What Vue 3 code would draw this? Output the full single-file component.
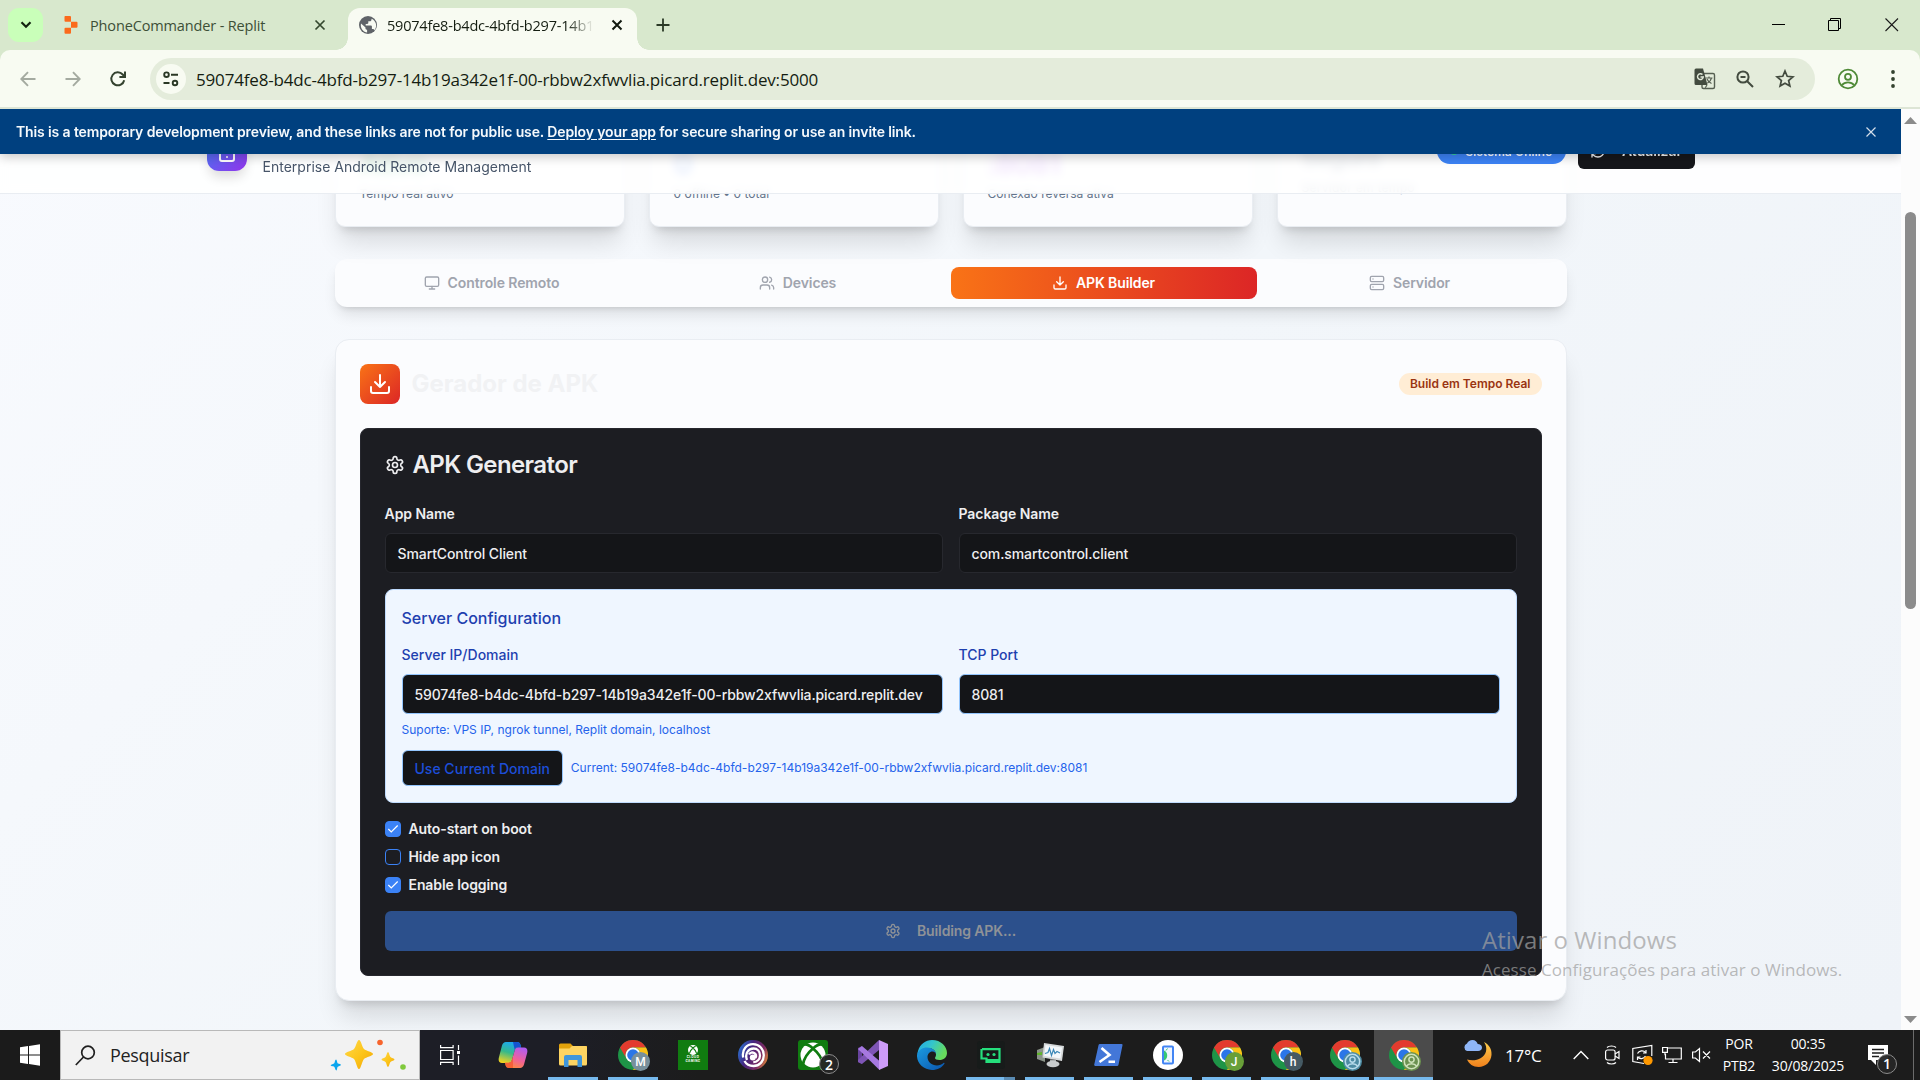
<script setup>
const host = '59074fe8-b4dc-4bfd-b297-14b19a342e1f-00-rbbw2xfwvlia.picard.replit.dev'

const stats = [
  { value: 'Ativo', note: 'Tempo real ativo', color: '#16a34a' },
  { value: '0', note: '0 offline • 0 total', color: '#2563eb' },
  { value: ':8081', note: 'Conexão reversa ativa', color: '#9333ea' },
  { value: 'Seguro', note: 'Servidor em tempo', color: '#64748b', raised: true },
]

const tabs = [
  { label: 'Controle Remoto', icon: 'monitor' },
  { label: 'Devices', icon: 'users' },
  { label: 'APK Builder', icon: 'download', active: true },
  { label: 'Servidor', icon: 'server' },
]

const options = [
  { label: 'Auto-start on boot', checked: true },
  { label: 'Hide app icon', checked: false },
  { label: 'Enable logging', checked: true },
]

const glyphs = {
  monitor: '<rect width="20" height="14" x="2" y="3" rx="2"/><path d="M8 21h8M12 17v4"/>',
  users: '<path d="M16 21v-2a4 4 0 0 0-4-4H6a4 4 0 0 0-4 4v2"/><circle cx="9" cy="7" r="4"/><path d="M22 21v-2a4 4 0 0 0-3-3.87M16 3.13a4 4 0 0 1 0 7.75"/>',
  download: '<path d="M21 15v4a2 2 0 0 1-2 2H5a2 2 0 0 1-2-2v-4M7 10l5 5 5-5M12 15V3"/>',
  server: '<rect width="20" height="8" x="2" y="2" rx="2"/><rect width="20" height="8" x="2" y="14" rx="2"/><path d="M6 6h.01M6 18h.01"/>',
  refresh: '<path d="M3 12a9 9 0 0 1 9-9 9.75 9.75 0 0 1 6.74 2.74L21 8M21 3v5h-5M21 12a9 9 0 0 1-9 9 9.75 9.75 0 0 1-6.74-2.74L3 16M8 16H3v5"/>',
  phone: '<rect width="14" height="20" x="5" y="2" rx="2"/><path d="M12 18h.01"/>',
  gear: '<path d="M12.22 2h-.44a2 2 0 0 0-2 2v.18a2 2 0 0 1-1 1.73l-.43.25a2 2 0 0 1-2 0l-.15-.08a2 2 0 0 0-2.73.73l-.22.38a2 2 0 0 0 .73 2.73l.15.1a2 2 0 0 1 1 1.72v.51a2 2 0 0 1-1 1.74l-.15.09a2 2 0 0 0-.73 2.73l.22.38a2 2 0 0 0 2.73.73l.15-.08a2 2 0 0 1 2 0l.43.25a2 2 0 0 1 1 1.73V20a2 2 0 0 0 2 2h.44a2 2 0 0 0 2-2v-.18a2 2 0 0 1 1-1.73l.43-.25a2 2 0 0 1 2 0l.15.08a2 2 0 0 0 2.73-.73l.22-.39a2 2 0 0 0-.73-2.73l-.15-.08a2 2 0 0 1-1-1.74v-.5a2 2 0 0 1 1-1.74l.15-.09a2 2 0 0 0 .73-2.73l-.22-.38a2 2 0 0 0-2.73-.73l-.15.08a2 2 0 0 1-2 0l-.43-.25a2 2 0 0 1-1-1.73V4a2 2 0 0 0-2-2z"/><circle cx="12" cy="12" r="3"/>',
}

const chromeProfiles = [
  { letter: 'J', color: '#689f38' },
  { letter: 'h', color: '#455a64' },
  { color: '#4d8ba3', ring: '#b9dcec' },
  { color: '#6b9150', ring: '#cfe3bb', current: true },
]
</script>

<template>
  <div class="screen">
    <div class="tabstrip">
      <div class="tab-search">
        <svg width="12" height="8" viewBox="0 0 12 8"><path d="M1.5 1.3 6 5.8l4.500-4.500" fill="none" stroke="#12230f" stroke-width="2.200" /></svg>
      </div>
      <div class="tab idle">
        <svg width="14" height="20" viewBox="0 0 14 20" fill="#fb6a1c"><path d="M1 1h5a1 1 0 0 1 1 1v4.700H1.500a1 1 0 0 1-1-1V2a1 1 0 0 1 .5-1zM7 6.700h5.500a1 1 0 0 1 1 1v4a1 1 0 0 1-1 1H7zM.500 13.700a1 1 0 0 1 1-1H7v5a1 1 0 0 1-1 1H1.500a1 1 0 0 1-1-1z" /></svg>
        <span class="idle-title">PhoneCommander - Replit</span>
        <svg class="close" width="12" height="12" viewBox="0 0 12 12"><path d="M1.500 1.500l9 9M10.500 1.500l-9 9" stroke="#35482f" stroke-width="1.700" /></svg>
      </div>
      <div class="tab current">
        <svg width="18" height="18" viewBox="0 0 18 18"><circle cx="9" cy="9" r="9" fill="#5f6368" /><path d="M2 7.500l4.500 4v1.500l1.600 1v2.500C4.500 16 1.800 13 1.800 9zM12.500 2.700v1c0 .8-.7 1.500-1.500 1.500H9.300V7c0 .5-.4.900-.9.900H6.700v1.700H12c.5 0 .9.400.9.900v2.600h.8c.8 0 1.400.5 1.600 1.200A7.300 7.300 0 0 0 12.500 2.700z" fill="#f8fbf2" /></svg>
        <span class="current-title">59074fe8-b4dc-4bfd-b297-14b19a</span>
        <svg class="close" width="12" height="12" viewBox="0 0 12 12"><path d="M1.500 1.500l9 9M10.500 1.500l-9 9" stroke="#12190f" stroke-width="2" /></svg>
      </div>
      <svg class="plus" width="14" height="14" viewBox="0 0 14 14"><path d="M7 .5v13M.5 7h13" stroke="#2b3a26" stroke-width="1.800" /></svg>
      <div class="window-controls">
        <svg width="14" height="14" viewBox="0 0 14 14"><path d="M1 6.500h13" stroke="#000" /></svg>
        <svg width="14" height="14" viewBox="0 0 14 14" fill="none" stroke="#000"><path d="M.500 2.500h10v10H.500zM2.500 2.500V.500h10v10h-2" /></svg>
        <svg width="14" height="14" viewBox="0 0 14 14"><path d="M.500.500l12.500 12.500M13 .500L.500 13" stroke="#1a1a1a" stroke-width="1.100" /></svg>
      </div>
    </div>

    <div class="toolbar-wrap">
      <div class="toolbar">
        <svg class="back" width="16" height="16" viewBox="0 0 16 16" fill="none" stroke="#a4aaa0" stroke-width="1.900"><path d="M15.500 8H1.500M8 1.200 1.300 8 8 14.800" /></svg>
        <svg class="forward" width="16" height="16" viewBox="0 0 16 16" fill="none" stroke="#a4aaa0" stroke-width="1.900"><path d="M.500 8h14M8 1.200 14.700 8 8 14.800" /></svg>
        <svg class="reload" width="18" height="18" viewBox="0 0 18 18" fill="none" stroke="#34422f" stroke-width="2"><path d="M15.200 10.200A6.500 6.500 0 1 1 13.700 4.500L15.500 6.500M16 1.500v5.600h-5.600" /></svg>
        <div class="omnibox">
          <div class="site-info">
            <svg width="18" height="18" viewBox="0 0 18 18" fill="none" stroke="#2a3825" stroke-width="1.900"><circle cx="4.500" cy="4.700" r="2.300" /><path d="M9 4.700h7M1.500 13h6" /><circle cx="13" cy="13" r="2.300" /></svg>
          </div>
          <span class="url">{{ host }}:5000</span>
          <svg class="translate" width="22" height="22" viewBox="0 0 22 22"><rect x="8" y="5.500" width="12.500" height="15" rx="1.500" fill="none" stroke="#565f52" stroke-width="1.400" /><path d="M2 .5h7l4.500 16.500H2A1.500 1.500 0 0 1 .5 15.500V2A1.500 1.500 0 0 1 2 .5z" fill="#434b3f" /><path d="M8.500 6.600A2.900 2.900 0 1 0 9.300 9H6.500" fill="none" stroke="#e4ecdb" stroke-width="1.400" /><path d="M11.500 10h7M15 8.500V10M17.500 10c-.6 2.500-2.500 4.300-4.200 5.300M13 11c.8 2 2.400 3.500 4.500 4.500M13 17l-1.700 2.800" fill="none" stroke="#565f52" stroke-width="1.200" /></svg>
          <svg class="zoom-out" width="18" height="18" viewBox="0 0 18 18" fill="none" stroke="#434b3f" stroke-width="2"><circle cx="7" cy="7" r="5.600" /><path d="M11.200 11.200 17 17M4.500 7h5" /></svg>
          <svg class="star" width="20" height="19" viewBox="0 0 20 19" fill="none" stroke="#434b3f" stroke-width="1.700"><path d="M10 2l2.200 5.300 5.700.5-4.300 3.700 1.300 5.600L10 14.200l-4.900 2.900 1.300-5.600L2.100 7.800l5.700-.5z" /></svg>
        </div>
        <svg class="profile" width="22" height="22" viewBox="0 0 22 22" fill="none" stroke="#4f8a37" stroke-width="1.800"><circle cx="11" cy="11" r="9.300" /><circle cx="11" cy="8.800" r="3" /><path d="M4.800 17.300c1.500-1.900 3.700-2.900 6.200-2.900s4.700 1 6.200 2.900" /></svg>
        <svg class="dots" width="4" height="18" viewBox="0 0 4 18" fill="#34422f"><circle cx="2" cy="2" r="1.900" /><circle cx="2" cy="9" r="1.900" /><circle cx="2" cy="16" r="1.900" /></svg>
      </div>
    </div>

    <div class="viewport">
      <div class="page">
        <div class="banner">
          <span>This is a temporary development preview, and these links are not for public use. <a>Deploy your app</a> for secure sharing or use an invite link.</span>
          <svg width="10" height="10" viewBox="0 0 10 10"><path d="M.5.500l9 9M9.500.500l-9 9" stroke="#d3dfeb" stroke-width="1.200" /></svg>
        </div>
        <header class="site-header">
          <div class="header-inner">
            <div class="logo"><svg class="ico" width="24" height="24" viewBox="0 0 24 24" v-html="glyphs.phone" /></div>
            <p class="tagline">Enterprise Android Remote Management</p>
            <span class="status"><i />Sistema Online</span>
            <span class="refresh"><svg class="ico" width="16" height="16" viewBox="0 0 24 24" v-html="glyphs.refresh" />Atualizar</span>
          </div>
        </header>

        <main>
          <section class="stats">
            <article v-for="s in stats" :key="s.note" class="stat" :class="{ raised: s.raised }">
              <strong :style="{ color: s.color }">{{ s.value }}</strong>
              <p>{{ s.note }}</p>
            </article>
          </section>

          <nav class="tabs">
            <span v-for="t in tabs" :key="t.label" class="tab-item" :class="{ active: t.active }">
              <svg class="ico" width="16" height="16" viewBox="0 0 24 24" v-html="glyphs[t.icon]" /><span class="lift">{{ t.label }}</span>
            </span>
          </nav>

          <section class="panel">
            <div class="panel-head">
              <div class="panel-icon"><svg class="ico" width="24" height="24" viewBox="0 0 24 24" v-html="glyphs.download" /></div>
              <h2>Gerador de APK</h2>
              <span class="pill"><span class="lift">Build em Tempo Real</span></span>
            </div>

            <div class="generator">
              <h3><svg class="ico" width="20" height="20" viewBox="0 0 24 24" v-html="glyphs.gear" /><span class="lift">APK Generator</span></h3>
              <div class="row">
                <div class="field"><label>App Name</label><div class="input">SmartControl Client</div></div>
                <div class="field"><label>Package Name</label><div class="input">com.smartcontrol.client</div></div>
              </div>

              <div class="server">
                <h4>Server Configuration</h4>
                <div class="row">
                  <div class="field">
                    <label>Server IP/Domain</label>
                    <div class="input host">{{ host }}</div>
                    <p class="hint">Suporte: VPS IP, ngrok tunnel, Replit domain, localhost</p>
                  </div>
                  <div class="field"><label>TCP Port</label><div class="input host">8081</div></div>
                </div>
                <div class="domain">
                  <span class="use-domain">Use Current Domain</span>
                  <span class="hint-inline">Current: {{ host }}:8081</span>
                </div>
              </div>

              <div class="options">
                <div v-for="o in options" :key="o.label" class="option">
                  <span class="box" :class="{ on: o.checked }">
                    <svg v-if="o.checked" width="14" height="14" viewBox="0 0 24 24" fill="none" stroke="#fff" stroke-width="2"><path d="M20 6 9 17l-5-5" /></svg>
                  </span><span class="lift">{{ o.label }}</span>
                </div>
              </div>
              <div class="build"><svg class="ico" width="16" height="16" viewBox="0 0 24 24" v-html="glyphs.gear" /><span class="lift">Building APK...</span></div>
            </div>
          </section>
        </main>
      </div>
      <div class="scrollbar">
        <svg width="13" height="7" viewBox="0 0 13 7"><path d="M6.500 0 13 7H0z" fill="#8b8b8b" /></svg>
        <div class="thumb" />
        <svg width="13" height="7" viewBox="0 0 13 7"><path d="M0 0h13L6.500 7z" fill="#8b8b8b" /></svg>
      </div>
    </div>

    <div class="watermark"><p class="w1">Ativar o Windows</p><p class="w2">Acesse Configurações para ativar o Windows.</p></div>

    <footer class="taskbar">
      <div class="start"><svg width="20" height="22" viewBox="0 0 20 22" fill="#fff"><path d="M0 3.200 8 2v8.500H0zM9 1.900 20 .3v10.200H9zM0 11.500h8V20l-8-1.200zM9 11.500h11v10.200L9 20.100z" /></svg></div>
      <div class="search">
        <svg width="21" height="21" viewBox="0 0 21 21" fill="none" stroke="#202020" stroke-width="1.700"><circle cx="13" cy="7.500" r="6.300" /><path d="M8.500 12 .8 20" /></svg>
        <span>Pesquisar</span>
        <svg class="sparkles" width="78" height="34" viewBox="0 0 78 34">
          <defs><linearGradient id="gold" x1="0" y1="0" x2="1" y2="1"><stop offset="0" stop-color="#ffd84a" /><stop offset=".55" stop-color="#fcc419" /><stop offset="1" stop-color="#f0a30a" /></linearGradient></defs>
          <path d="M30 2c2 0 3 7 5 9s9 3 9 5-7 3-9 5-3 10-5 10-3-8-5-10-9-3-9-5 7-3 9-5 3-9 5-9z" fill="url(#gold)" />
          <path d="M59 14c1 0 1.500 4 2.500 5s4 1.500 4 2.500-3 1.500-4 2.500-1.500 5-2.500 5-1.500-4-2.500-5-4-1.500-4-2.500 3-1.500 4-2.500 1.500-5 2.500-5z" fill="url(#gold)" />
          <path d="M7 21.500c1 0 1 3.500 2 4s3.200.5 3 1.500-3 1-3.500 2-.3 3.600-1.300 3.400-1.200-3-2-3.600-3.700-.5-3.500-1.500 3-1 3.600-2 .700-3.800 1.700-3.800z" fill="#0aa5ee" />
          <circle cx="51" cy="4.500" r="2.800" fill="#f7642c" /><circle cx="74" cy="29" r="2.800" fill="#80c93c" />
        </svg>
      </div>
      <div class="apps">
        <div class="app wide task-view"><svg width="20" height="20" viewBox="0 0 20 20" fill="none" stroke="#fff" stroke-width="1.200"><path d="M.600 5.500h12.500v9H.600zM.600 0v2.600h12.500V0M.600 20v-2.600h12.500V20M18.500 0v5M18.500 10.500V20" /><path d="M17 6h3v3h-3z" fill="#fff" stroke="none" /></svg></div>
        <div class="app wide">
          <svg width="30" height="28" viewBox="0 0 30 28">
            <defs>
              <linearGradient id="cpA" x1=".6" y1="0" x2=".3" y2="1"><stop offset="0" stop-color="#1aa7f5" /><stop offset=".5" stop-color="#35b98b" /><stop offset="1" stop-color="#f3d31f" /></linearGradient>
              <linearGradient id="cpB" x1=".7" y1="0" x2=".3" y2="1"><stop offset="0" stop-color="#b15cf0" /><stop offset=".55" stop-color="#f0619a" /><stop offset="1" stop-color="#ff8a3c" /></linearGradient>
            </defs>
            <path d="M8 1h11c2 0 3 1 3.500 3l.7 2.500h-3c-2 0-3 1-3.500 3L14 19c-.7 2-1.500 3-3.500 3H4c-3 0-4-2.500-3-6L4 4.500C4.700 2.300 6 1 8 1z" fill="url(#cpA)" />
            <path d="M15 1h4c2 0 3 1 3.500 3l.7 2.500h-3c-2 0-3 .5-3.500 2.500z" fill="#1454cf" />
            <path d="M22 27H11c-2 0-3-1-3.500-3L7 21.800h3.500c2 0 2.800-1 3.500-3L16.700 9.500c.5-2 1.500-3 3.500-3H26c3 0 4 2.500 3 6L26 23.500c-.7 2.200-2 3.500-4 3.500z" fill="url(#cpB)" />
            <path d="M7 21.800h3.500c2 0 2.800-1 3.500-3l1-3.200V27h-4c-2 0-3-1-3.500-3z" fill="#f4552f" opacity=".75" />
          </svg>
        </div>
        <div class="app wide open"><svg width="28" height="24" viewBox="0 0 28 24"><path d="M0 2a1.500 1.500 0 0 1 1.500-1.500h10L14 3H28v6H0z" fill="#e2a20b" /><path d="M0 5.500h10.500L13 3h13.500A1.500 1.500 0 0 1 28 4.500V21a1.500 1.500 0 0 1-1.500 1.500h-25A1.500 1.500 0 0 1 0 21z" fill="#fdd462" /><path d="M5 14a2 2 0 0 1 2-2h14a2 2 0 0 1 2 2v10h-4.500v-7h-9v7H5z" fill="#3f96db" /></svg></div>
        <div class="app wide open"><svg class="chrome" width="30" height="30" viewBox="0 0 48 48"><circle cx="24" cy="24" r="24" fill="#1e9447" /><path d="M24 12h20.800A24 24 0 0 0 3.200 12L13.600 30A12 12 0 0 1 24 12z" fill="#e33b2e" /><path d="M24 12h20.800A24 24 0 0 1 24 48L34.400 30A12 12 0 0 0 24 12z" fill="#fbc116" /><circle cx="24" cy="24" r="12" fill="#fff" /><circle cx="24" cy="24" r="9.300" fill="#2a76e8" /></svg><b class="avatar muted">M</b></div>
        <div class="app wide"><div class="cloud"><svg width="10" height="10" viewBox="0 0 30 30"><circle cx="15" cy="15" r="15" fill="#fff" /><path d="M7 4c3 0 6 3 8 5 2-2 5-5 8-5M15 9C9 14 5 20 4 26M15 9c6 5 10 11 11 17" fill="none" stroke="#107c10" stroke-width="3.500" /></svg><em>CLOUD</em><em>GAMING</em></div></div>
        <div class="app wide">
          <svg width="30" height="30" viewBox="0 0 30 30"><defs><linearGradient id="ubi" x1="0" y1=".3" x2="1" y2=".7"><stop offset="0" stop-color="#2c6fd0" /><stop offset=".35" stop-color="#45257f" /><stop offset=".75" stop-color="#7e2b62" /><stop offset="1" stop-color="#e08a3a" /></linearGradient></defs><circle cx="15" cy="15" r="15" fill="url(#ubi)" /><g fill="none" stroke="#fff" stroke-width="2.300"><path d="M5.200 17.500C3.500 9 9 4.200 15 4.200c6.500 0 10.800 5 10.800 11S21.500 26 15.500 26c-4.500 0-7.500-2.200-9-5" /><path d="M9 20C6.500 13.500 10.500 8.500 15.500 8.500c4 0 6.500 3.200 6.500 7s-3 6.700-6.700 6.700" /><path d="M11 14.500c1-2 3.500-2.500 5.200-1.500 1.900 1.200 2.200 3.300 1.300 5" /></g><circle cx="14.800" cy="17.500" r="3" fill="#fff" /></svg>
        </div>
        <div class="app wide"><svg width="30" height="30" viewBox="0 0 30 30"><rect width="30" height="30" rx="3" fill="#107c10" /><circle cx="15" cy="15" r="12.500" fill="#fff" /><path d="M6 4.500c3.500-.5 6.500 1.700 9 4 2.500-2.300 5.500-4.500 9-4M15 8.500C9.500 13 6 18 5 24.500M15 8.500c5.500 4.500 9 9.500 10 16" fill="none" stroke="#107c10" stroke-width="2.800" /></svg><b class="count">2</b></div>
        <div class="app wide"><svg width="30" height="30" viewBox="0 0 30 30"><path d="M0 8l4-2v18l-4-2z" fill="#67439d" /><path d="M21 0v10L4 24l-4-2v-2z" fill="#7e55b5" /><path d="M4 6l17.500 15V30L0 9z" fill="#a678e0" /><path d="M21 0l9 4v22l-9 4z" fill="#cd9bf8" /></svg></div>
        <div class="app">
          <svg width="30" height="30" viewBox="0 0 30 30"><defs><linearGradient id="edA" x1="0" y1="0" x2="1" y2=".4"><stop offset="0" stop-color="#20a7e8" /><stop offset=".5" stop-color="#34c5cc" /><stop offset="1" stop-color="#67dc5c" /></linearGradient><linearGradient id="edB" x1="0" y1="0" x2="1" y2="1"><stop offset="0" stop-color="#1a9be0" /><stop offset="1" stop-color="#0b55ae" /></linearGradient></defs><path d="M1 11C3 4 8.500 0 15 0c9 0 15 6.500 15 13 0 4.500-3.500 7-7.500 7-3 0-4.500-1-4.500-2 0-.8 1-1.200 1-3.500C19 11 16 8 11 8 6 8 2 11 0 15z" fill="url(#edA)" /><path d="M0 15c1-5 5.500-7.500 10-7.500 5 0 9 3 9 7 0-1.500-1.500-3-3.500-3-3 0-5 2.500-5 5.500 0 4.500 4 8.500 9.500 8.500 2.500 0 5-1 6.500-2.500.6-.6 1.300 0 .9.700C25 27.500 20.500 30 15 30 6.500 30-.5 23 0 15z" fill="url(#edB)" /></svg>
        </div>
        <div class="app open grouped"><svg width="28" height="28" viewBox="0 0 28 28"><rect width="28" height="28" rx="3" fill="#171b1a" /><path d="M5 8.200h17.500v11H9.500M4.500 8v9.500h5V21h14" fill="none" stroke="#25e07d" stroke-width="2.200" /><circle cx="11" cy="13.500" r="1.600" fill="#25e07d" /><circle cx="17" cy="13.500" r="1.600" fill="#25e07d" /></svg></div>
        <div class="app open"><svg width="28" height="26" viewBox="0 0 28 26"><path d="M1 8l8-3v15l-8-3z" fill="#8b9489" /><path d="M1 11l5-1v3l-5 0z" fill="#60b42a" /><path d="M8 1l20 3-2 15L6.500 15.500z" fill="#d6d9da" /><path d="M9.500 3l16.500 2.500-1.500 11L8.200 14z" fill="#f3f7fa" /><path d="M9 11.500l3-1 1.500-4 2 7 2-6 1.500 4 2-2 3 1.500" fill="none" stroke="#3a87b7" stroke-width="1.200" /><path d="M14 17.500h6v3h-6z" fill="#a9adad" /><ellipse cx="17" cy="22" rx="6.500" ry="3.200" fill="#c9cccd" /></svg></div>
        <div class="app open"><svg width="29" height="22" viewBox="0 0 29 22"><path d="M6 0h21.500a1 1 0 0 1 1 1.200l-4 19.500a1.500 1.500 0 0 1-1.500 1.200H1.200A1 1 0 0 1 .2 20.700L4.500 1.200A1.500 1.500 0 0 1 6 0z" fill="#4377d8" /><path d="M7.500 4l8 7-10 7M14.500 17.800h6.500" fill="none" stroke="#fff" stroke-width="2.600" /></svg></div>
        <div class="app open"><svg width="30" height="30" viewBox="0 0 30 30"><circle cx="15" cy="15" r="15" fill="#fff" /><rect x="10" y="6.500" width="10" height="17" rx="1" fill="#eef4ff" stroke="#4285f4" stroke-width="2" /><path d="M11 10.500a5.500 5.500 0 0 1 0 10z" fill="#35c774" /><path d="M13 10.500l1.500-2M14.500 20l1.500 1.500" stroke="#35c774" stroke-width="1" /></svg></div>
        <div v-for="(p, i) in chromeProfiles" :key="i" class="app open" :class="{ focused: p.current }">
          <svg class="chrome" width="30" height="30" viewBox="0 0 48 48"><circle cx="24" cy="24" r="24" fill="#1e9447" /><path d="M24 12h20.800A24 24 0 0 0 3.200 12L13.600 30A12 12 0 0 1 24 12z" fill="#e33b2e" /><path d="M24 12h20.800A24 24 0 0 1 24 48L34.400 30A12 12 0 0 0 24 12z" fill="#fbc116" /><circle cx="24" cy="24" r="12" fill="#fff" /><circle cx="24" cy="24" r="9.300" fill="#2a76e8" /></svg>
          <b class="avatar" :style="{ background: p.color }">
            <template v-if="p.letter">{{ p.letter }}</template>
            <svg v-else width="19" height="19" viewBox="0 0 19 19" fill="none" :stroke="p.ring" stroke-width="1.500"><circle cx="9.500" cy="9.500" r="7.200" /><circle cx="9.500" cy="7.600" r="2.600" /><path d="M4.500 14c1-1.500 3-2.300 5-2.300s4 .8 5 2.300" /></svg>
          </b>
        </div>
      </div>
      <div class="tray">
        <svg class="weather" width="30" height="30" viewBox="0 0 30 30"><defs><linearGradient id="moon" x1="0" y1="0" x2="0" y2="1"><stop offset="0" stop-color="#ffcf4d" /><stop offset="1" stop-color="#f0801c" /></linearGradient></defs><path d="M21 3c5 2.500 8 7 7.500 13-.6 7-6 12-12.800 12C10 28 6 25 4 20.500c8 2.500 17-1 19-8 .8-3.500 0-6.500-2-9.500z" fill="url(#moon)" /><path d="M4 12a4 4 0 0 1 0-7.500C5 2.500 7 1 9.500 1c2.700 0 4.600 1.700 5.200 4 2.300 0 4.300 1.300 4.300 3.500S17.500 12 15 12z" fill="#8fb6f7" /></svg>
        <span class="temp">17°C</span>
        <svg class="chev" width="16" height="10" viewBox="0 0 16 10" fill="none" stroke="#fff" stroke-width="1.400"><path d="M.700 9 8 1.500 15.300 9" /></svg>
        <svg class="cam" width="15" height="20" viewBox="0 0 15 20" fill="none" stroke="#fff" stroke-width="1.200"><rect x=".6" y="5" width="9.500" height="10" rx="2" /><path d="M10 9l4-2.500v7L10 11M2 2.500c2-2 7-2 9 0M2 17.500c2 2 7 2 9 0" /></svg>
        <svg class="upd" width="22" height="22" viewBox="0 0 22 22" fill="none" stroke="#fff" stroke-width="1.200"><path d="M12 19.500.800 17.500V4.500L19.800 1.500V12M5.500 9.500c1.500-3 6-3.500 8-1M14 6v3h-3M13.500 12c-1.500 3-6 3.500-8 1M5.500 16v-3h3" /><circle cx="16" cy="16.500" r="4.600" fill="#ff9800" stroke="none" /></svg>
        <svg class="net" width="20" height="18" viewBox="0 0 20 18" fill="none" stroke="#fff" stroke-width="1.200"><path d="M6 2h13.300v11H3.500V8M11 13v3.500M6.500 16.500h9M.6 1.500h4.800v4.800H.6zM3 6.300v3" /></svg>
        <svg class="vol" width="19" height="16" viewBox="0 0 19 16" fill="none" stroke="#fff" stroke-width="1.200"><path d="M.6 5h2.800L7.500 1.500v13L3.400 11H.6zM11 4.500l7 7M18 4.500l-7 7" /></svg>
        <div class="lang"><span>POR</span><span>PTB2</span></div>
        <div class="clock"><span>00:35</span><span>30/08/2025</span></div>
        <div class="notif"><svg width="20" height="20" viewBox="0 0 20 20"><path d="M0 0h20v15H8v5l-5-5H0z" fill="#fff" /><path d="M4 4.500h12M4 8h12M4 11.500h7" stroke="#1c1c1c" stroke-width="1.300" /></svg><b class="count">1</b></div>
        <i class="peek" />
      </div>
    </footer>
  </div>
</template>

<style>
body { overflow: hidden; }
</style>

<style scoped>
* { box-sizing: border-box; }
p, h2, h3, h4 { margin: 0; }
svg { display: block; flex: none; }
.screen {
  position: relative; width: 1920px; height: 1080px; overflow: hidden;
  display: flex; flex-direction: column;
  font-family: "Open Sans", "Noto Sans", sans-serif;
}
.ico { fill: none; stroke: currentColor; stroke-width: 2; stroke-linecap: round; stroke-linejoin: round; }
.lift { padding-bottom: 2px; }

/* Browser frame */
.tabstrip { height: 50px; background: #d8e8cd; display: flex; align-items: center; padding-left: 8px; flex: none; }
.tab-search { width: 35px; height: 34px; border-radius: 11px; background: #c9ffb9; display: flex; align-items: center; justify-content: center; }
.tab { display: flex; align-items: center; font-size: 14.500px; white-space: nowrap; }
.idle { width: 305px; padding-left: 20.500px; color: #3d4f37; }
.idle-title { margin-left: 12.500px; width: 224px; letter-spacing: -.14px; }
.current { position: relative; width: 289px; height: 42px; margin-top: 8px; padding: 0 0 8px 11px; border-radius: 12px 12px 0 0; background: #f8fbf2; color: #141d11; }
.current::before, .current::after { content: ""; position: absolute; bottom: 0; width: 12px; height: 12px; }
.current::before { left: -12px; background: radial-gradient(circle at 0 0, transparent 11.500px, #f8fbf2 12px); }
.current::after { right: -12px; background: radial-gradient(circle at 100% 0, transparent 11.500px, #f8fbf2 12px); }
.current-title { margin-left: 10px; width: 207px; overflow: hidden; letter-spacing: -.2px; mask-image: linear-gradient(90deg, #000 180px, transparent 207px); }
.current .close { margin-left: 17px; }
.plus { margin-left: 19px; }
.window-controls { margin-left: auto; display: flex; gap: 43px; padding: 0 21px 1px 0; }
.window-controls svg { width: 14px; }
.toolbar-wrap { height: 59px; background: #d8e8cd; flex: none; }
.toolbar { height: 59px; background: #f8fbf2; border-bottom: 2px solid #dde5d5; border-radius: 10px 10px 0 0; display: flex; align-items: center; padding-left: 20px; }
.forward { margin-left: 29px; }
.reload { margin-left: 28px; }
.omnibox { margin-left: 23px; width: 1665px; height: 42px; border-radius: 21px; background: #e4ecdb; display: flex; align-items: center; padding-left: 6px; }
.site-info { width: 30px; height: 30px; border-radius: 50%; background: #f8fbf2; display: flex; align-items: center; justify-content: center; }
.url { margin-left: 10px; width: 1498px; padding-top: 1px; font-size: 17px; color: #141d11; letter-spacing: -.165px; white-space: nowrap; }
.zoom-out { margin-left: 20px; }
.star { margin-left: 21px; }
.profile { margin-left: 22px; }
.dots { margin-left: 32px; }

/* Web page */
.viewport { height: 921px; display: flex; flex: none; overflow: hidden; }
.page {
  position: relative; width: 1901px; overflow: hidden;
  font-family: Inter, sans-serif; font-size: 14px;
  background: linear-gradient(135deg, #f8fafe 0%, #f2f6fa 50%, #eff3f8 100%);
}
.banner {
  position: absolute; inset: 0 0 auto 0; z-index: 5; height: 45px; padding: 0 25px 0 16px;
  display: flex; align-items: center; justify-content: space-between;
  background: #00407f; color: #f5f9fc; font-size: 14px; font-weight: 600; letter-spacing: -.123px;
  box-shadow: 0 3px 10px rgba(0, 0, 0, .22);
}
.banner a { text-decoration: underline; text-underline-offset: 2px; }
.site-header {
  position: relative; z-index: 2; height: 85px; border-bottom: 1px solid #e9edf2;
  background: rgba(255, 255, 255, .89); backdrop-filter: blur(4px);
}
.header-inner { width: 1488px; height: 84px; margin: 0 auto; display: flex; align-items: center; }
.logo { width: 40px; height: 40px; border-radius: 12px; display: flex; align-items: center; justify-content: center; color: #fff; background: linear-gradient(135deg, #3b82f6, #9333ea); box-shadow: 0 8px 12px -2px rgba(0, 0, 0, .14); }
.tagline { margin: 32px 0 0 16px; color: #475569; font-size: 14px; line-height: 20px; letter-spacing: .01px; }
.status { margin-left: auto; width: 129px; height: 26px; border-radius: 13px; display: flex; align-items: center; padding-left: 13px; background: #3c83f6; color: #fff; font-size: 12px; font-weight: 600; }
.status i { width: 8px; height: 8px; margin-right: 8px; border-radius: 50%; background: #34d399; }
.refresh { margin-left: 12px; width: 117px; height: 36px; padding-bottom: 1px; border-radius: 6px; background: #16171b; color: #f2f2f3; display: flex; align-items: center; justify-content: center; gap: 16px; font-weight: 600; }

main { width: 1232px; margin: -98px auto 0; }
.stats { display: grid; grid-template-columns: repeat(4, 290px); justify-content: space-between; }
.stat {
  height: 131px; padding: 0 24px 24px; border-radius: 10px; border: 1px solid #e9edf2; background: #fbfcfe;
  display: flex; flex-direction: column; justify-content: flex-end;
  box-shadow: 0 20px 25px -5px rgba(0, 0, 0, .12), 0 8px 10px -6px rgba(0, 0, 0, .15);
}
.stat strong { font-size: 28px; line-height: 32px; font-weight: 700; margin-bottom: 6px; letter-spacing: -1px; }
.stat p { font-size: 12px; line-height: 16px; color: #64748b; }
.stat.raised { padding-bottom: 30px; }
.stat.raised strong { font-size: 24px; }
.stat.raised p { letter-spacing: .3px; }
.tabs {
  margin-top: 32px; height: 48px; padding: 8px 4px; display: grid; grid-template-columns: repeat(4, 1fr);
  border-radius: 12px; background: #fbfcfe;
  box-shadow: 0 10px 15px -3px rgba(0, 0, 0, .11), 0 4px 6px -4px rgba(0, 0, 0, .16);
}
.tab-item { display: flex; align-items: center; justify-content: center; gap: 8px; border-radius: 8px; color: #a0a4ae; font-weight: 600; letter-spacing: -.1px; }
.tab-item.active { color: #fff; background: linear-gradient(90deg, #f97316, #dc2626); }
.panel {
  margin-top: 32px; height: 662px; padding: 24px; border: 1px solid #e9edf2; border-radius: 14px; background: #fbfcfe;
  box-shadow: 0 20px 25px -5px rgba(0, 0, 0, .12), 0 8px 10px -6px rgba(0, 0, 0, .15);
}
.panel-head { height: 40px; display: flex; align-items: center; }
.panel-icon { width: 40px; height: 40px; border-radius: 8px; display: flex; align-items: center; justify-content: center; color: #fff; background: linear-gradient(135deg, #f97316, #dc2626); }
.panel h2 { margin-left: 12px; padding-bottom: 2px; font-size: 24px; font-weight: 700; color: #f1f2f4; }
.pill { margin-left: auto; height: 22px; padding: 0 11px; border-radius: 11px; display: flex; align-items: center; background: #ffedd5; color: #9a3412; font-size: 12px; font-weight: 600; }
.generator { margin-top: 24px; height: 548px; padding: 24px; border: 1px solid #26272e; border-radius: 8px; background: #1c1d22; color: #eeeef0; font-weight: 500; }
.generator h3 { display: flex; align-items: center; gap: 8px; height: 24px; font-size: 24px; font-weight: 600; letter-spacing: -.6px; }
.row { display: grid; grid-template-columns: repeat(2, minmax(0, 1fr)); gap: 16px; }
.generator > .row { margin-top: 27px; }
.field label { display: block; height: 20px; line-height: 20px; font-weight: 600; letter-spacing: -.06px; }
.input { margin-top: 9px; height: 40px; padding: 0 12px; display: flex; align-items: center; border: 1px solid #27282e; border-radius: 6px; background: #141518; white-space: nowrap; letter-spacing: -.1px; }
.server { margin-top: 16px; height: 214px; padding: 16px; border: 1px solid #bfdbfe; border-radius: 8px; background: #eff6ff; color: #1d4ed8; }
.server h4 { height: 24px; line-height: 24px; font-size: 16px; font-weight: 500; color: #1e40af; }
.server .row { margin-top: 15px; }
.server label { font-weight: 500; color: #1e40af; letter-spacing: 0; }
.server .input { border-color: #93c5fd; color: #eeeef0; }
.server .host { letter-spacing: -.125px; }
.hint { margin-top: 8px; font-size: 12px; line-height: 16px; font-weight: 400; color: #2563eb; }
.domain { margin-top: 12px; display: flex; align-items: center; gap: 8px; }
.use-domain { height: 36px; padding: 0 12px; display: flex; align-items: center; border: 1px solid #93c5fd; border-radius: 6px; background: #141518; color: #1d4ed8; }
.hint-inline { padding-bottom: 1px; font-size: 12px; font-weight: 400; color: #2563eb; }
.options { margin-top: 18px; display: flex; flex-direction: column; gap: 12px; }
.option { height: 16px; display: flex; align-items: center; gap: 8px; font-weight: 600; letter-spacing: -.09px; }
.box { width: 16px; height: 16px; border: 1px solid #3b82f6; border-radius: 4px; display: flex; align-items: center; justify-content: center; }
.box.on { background: #3b82f6; }
.build { margin-top: 18px; height: 40px; border-radius: 6px; display: flex; align-items: center; justify-content: center; gap: 16px; background: #2c508c; color: #8f9297; font-weight: 600; letter-spacing: -.12px; }

.scrollbar { width: 19px; background: #fcfcfc; display: flex; flex-direction: column; align-items: center; padding: 8px 0 7px; }
.thumb { width: 11px; height: 397px; margin: 88px 0 auto; border-radius: 6px; background: #8b8b8b; }
.watermark { position: absolute; left: 1482px; top: 921px; z-index: 6; color: rgba(160, 160, 160, .72); white-space: nowrap; }
.w1 { font-size: 24px; line-height: 38px; letter-spacing: .06px; }
.w2 { font-size: 17px; line-height: 22px; letter-spacing: .06px; }

/* Windows taskbar */
.taskbar { height: 50px; flex: none; display: flex; background: linear-gradient(90deg, #1b1b1b 0, #1b1b1b 60px, #1d1e26 420px, #1d1e26 560px, #1c1c1c 700px); color: #fff; }
.start { width: 60px; display: flex; align-items: center; justify-content: center; }
.search { width: 360px; background: #f2f2f2; border: 1px solid #b9b9b9; display: flex; align-items: center; padding-left: 14px; color: #222; font-size: 18px; }
.search span { margin-left: 14px; width: 80px; letter-spacing: -.3px; }
.sparkles { margin-left: 139px; }
.apps { display: flex; margin-left: 3px; }
.app { position: relative; width: 59px; display: flex; align-items: center; justify-content: center; }
.app.wide { width: 60px; }
.app.wide + .app:not(.wide) { margin-left: -1px; }
.task-view { padding-right: 6px; }
.app.open::after { content: ""; position: absolute; left: 5px; right: 5px; bottom: 0; height: 3px; background: #76b9ed; }
.app.grouped::after { background: linear-gradient(90deg, #76b9ed 38px, #5a8bb3 38px); }
.app.focused { background: #4b4b4b; }
.app.focused::after { left: 0; right: 0; }
.avatar { position: absolute; left: 50%; top: 22px; margin-left: -2px; width: 19px; height: 19px; border-radius: 50%; display: flex; align-items: center; justify-content: center; font: 500 12px Roboto, sans-serif; color: #fff; }
.avatar.muted { background: #78909c; }
.cloud { width: 30px; height: 30px; padding-top: 5px; background: #107c10; display: flex; flex-direction: column; align-items: center; }
.cloud em { font: 700 3px/3px Inter, sans-serif; margin-top: 1px; letter-spacing: .4px; }
.count { position: absolute; left: 36px; top: 24px; width: 20px; height: 20px; border: 1px solid #8c8c8c; border-radius: 50%; background: rgba(38, 38, 38, .95); display: flex; align-items: center; justify-content: center; font-size: 14px; font-weight: 600; }
.tray { flex: 1; display: flex; align-items: center; font-size: 15px; white-space: nowrap; }
.weather { margin: 0 0 2px 30px; }
.temp { margin-left: 12px; width: 37px; font-size: 17px; letter-spacing: -.2px; }
.chev { margin-left: 31px; }
.cam { margin-left: 16px; }
.upd { margin-left: 12px; }
.net { margin-left: 8px; }
.vol { margin-left: 10px; }
.lang, .clock { display: flex; flex-direction: column; align-items: center; line-height: 22px; font-size: 14px; letter-spacing: -.2px; }
.lang { margin-left: 8px; width: 40px; }
.clock { margin-left: 10px; width: 78px; }
.notif { position: relative; margin: 0 0 1px 21px; }
.notif .count { left: 9px; top: 9px; }
.peek { width: 1px; height: 50px; margin-left: 25px; background: #6b6b6b; }
</style>
